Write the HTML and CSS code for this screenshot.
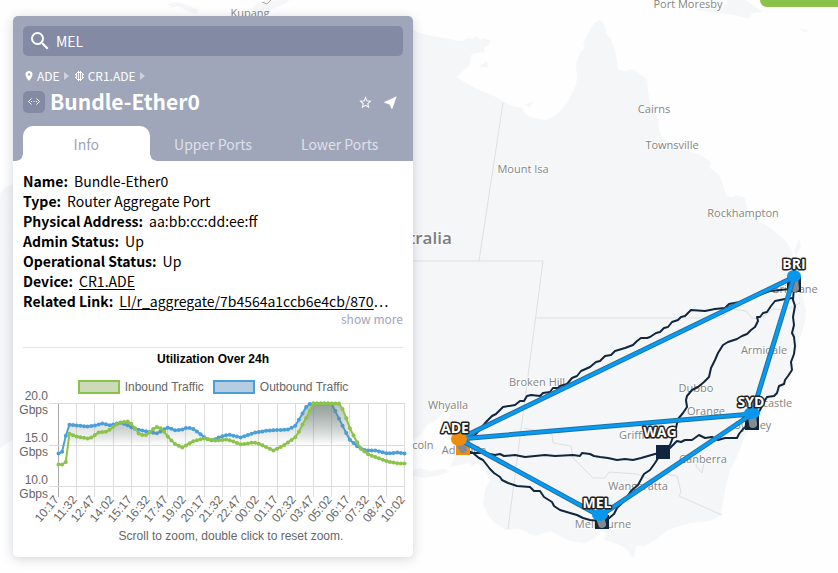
FILE: index.html
```html
<!DOCTYPE html>
<html lang="en">
<head>
<meta charset="utf-8">
<title>Network map</title>
<meta name="viewport" content="width=device-width, initial-scale=1">
<link rel="stylesheet" href="styles.css">
</head>
<body>
<svg class="map" viewBox="0 0 838 573" preserveAspectRatio="xMinYMin slice" role="img" aria-label="Map of network links">
  <g class="land">
    <path d="M0 194L4 188L13 184L200 40L413 30L420 33L432 36L445 38L458 41L463 41L467 38L473 39L477 36L480 40L484 38L491 41L489 45L484 48L485 52L477 53L471 55L470 65L462 72L457 77L464 82L475 88L487 93L498 98L510 105L522 108L526 115L535 118L545 120L553 117L560 111L567 103L572 93L576 85L577 78L576 65L580 52L585 48L583 43L589 32L594 23L600 20L605 26L606 33L611 40L615 50L617 62L618 70L625 71L633 69L640 74L647 79L648 90L650 105L658 118L659 130L663 139L672 143L683 149L695 153L707 159L711 163L709 167L720 176L723 185L726 196L733 197L736 195L745 198L748 213L757 220L768 226L775 232L785 240L792 251L794 262L798 275L801 290L806 310L805 322L798 345L795 355L793 370L788 382L778 395L765 410L757 420L745 435L738 455L730 470L725 490L721 515L710 521L690 523L668 530L655 540L645 546L636 546L634 558L630 555L628 550L620 545L608 541L603 539L607 534L601 530L595 538L585 543L570 541L550 531L535 536L520 529L505 530L490 518L483 505L485 490L490 480L485 470L477 463L472 467L470 463L460 465L450 467L453 460L457 449L450 440L446 430L454 395L455 411L444 412L435 421L427 425L420 436L413 440L413 445L200 420L100 400L10 441L0 448Z"/>
    <path d="M413 470L420 468L430 471L445 469L449 472L440 475L425 478L413 476Z"/>
    <path d="M167 4L176 2L187 5L199 10L196 14L189 12L180 7L172 7Z"/>
    <path d="M252 11L256 4L266 1L285 0L290 0L284 4L275 8L266 11Z"/>
    <path d="M695 10L706 6L722 8L728 0L745 0L757 8L763 12L752 13L749 19L735 15L718 13Z"/>
    <path d="M478 67L487 61L488 67Z"/>
    <path d="M799 238L801 246L796 256L794 252Z"/>
    <path d="M524 105L534 101L529 107Z"/>
    <path d="M800 28L810 31L803 32Z"/>
  </g>
  <g class="borders">
    <path d="M503 103L479 261M413 261H543L508 529M535 318H720L733 309L746 311L752 318L760 319L773 309L786 310L800 303M524 428L552 434L553 443L571 446L573 458L582 467L593 478L605 478L609 472L637 474L652 480L663 474L677 476L681 492L679 496L722 515M697 455L696 466L702 473L704 463"/>
    <path class="coast" d="M262 2L267 4L271 0"/>
  </g>
  <g class="places">
    <text x="250" y="17">Kupang</text>
    <text x="688" y="8">Port Moresby</text>
    <text x="654" y="113">Cairns</text>
    <text x="672" y="149">Townsville</text>
    <text x="523" y="173">Mount Isa</text>
    <text x="743" y="217">Rockhampton</text>
    <text class="country" x="415" y="244">Australia</text>
    <text x="537" y="386">Broken Hill</text>
    <text x="448" y="409">Whyalla</text>
    <text x="403" y="449">Port Lincoln</text>
    <text x="464" y="454">Adelaide</text>
    <text x="795" y="293">Brisbane</text>
    <text x="764" y="354">Armidale</text>
    <text x="696" y="392">Dubbo</text>
    <text x="706" y="415">Orange</text>
    <text x="766" y="407">Newcastle</text>
    <text x="753" y="429">Sydney</text>
    <text x="637" y="439">Griffith</text>
    <text x="703" y="463">Canberra</text>
    <text x="638" y="490">Wangaratta</text>
    <text x="603" y="528">Melbourne</text>
  </g>
  <g class="fibre">
    <path d="M462 444L475 435L487 421L492 416L496 414L503 407L515 405L520 401L524 401L527 396L531 395L540 396L543 393L550 392L553 388L558 388L560 386L567 384L572 378L577 376L581 371L590 367L596 362L600 361L605 356L611 355L615 351L625 348L633 345L637 341L641 338L647 338L650 337L656 333L660 332L664 328L668 327L672 322L678 320L681 317L685 316L691 310L705 311L715 309L725 308L729 304L740 302L770 291L790 289"/>
    <path d="M793 298L785 299L775 301L771 306L767 312L763 313L760 317L757 317L758 321L755 327L751 330L747 334L742 336L737 339L728 342L723 345L718 353L715 360L711 368L709 377L704 382L698 387L692 390L687 396L686 400L687 407L683 413L678 419L675 432L670 445L663 452"/>
    <path d="M794 287L793 300L795 306L793 317L794 325L792 333L794 337L795 346L794 354L791 362L792 370L788 376L785 380L784 384L779 386L777 393L774 396L767 397L764 402L760 410L753 422"/>
    <path d="M463 449L470 453L485 453L495 455L500 454L504 456L515 455L525 457L545 455L555 456L573 455L580 456L582 453L590 454L594 456L600 457L608 458L617 460L625 459L633 460L641 458L655 454L663 452L670 448L677 441L681 442L685 440L692 440L699 435L705 438L712 437L718 440L725 438L737 438L739 434L743 429L752 422"/>
    <path d="M463 449L473 453L479 458L483 460L490 469L494 473L500 477L502 480L508 483L517 486L530 487L534 491L540 491L544 497L552 502L554 506L560 510L570 513L577 515L583 518L590 520L601 521L608 519L614 514L617 508L625 500L631 491L638 485L644 474L650 470L655 463L660 455"/>
  </g>
  <g class="sites">
    <path class="site-active" d="M456 440h14v15h-14z"/>
    <path d="M787 277h14v15h-14zM745 416h14v14h-14zM656 445h14v14h-14zM595 515h14v14h-14z"/>
    <path class="stem" d="M459 440L463 449M794 278L795 288M752 415L753 424M600 517L602 524"/>
  </g>
  <g class="links-edge"><path d="M459 439L794 277L752 414L459 439L600 516L752 414"/></g>
  <g class="links"><path d="M459 439L794 277L752 414L459 439L600 516L752 414"/></g>
  <g class="nodes">
    <ellipse class="node-active" cx="459" cy="439" rx="8" ry="7"/>
    <ellipse cx="794" cy="276" rx="7" ry="6"/>
    <ellipse cx="752" cy="413" rx="8" ry="6"/>
    <ellipse cx="600" cy="515" rx="8" ry="6"/>
  </g>
  <g class="node-labels">
    <text x="455" y="433">ADE</text>
    <text x="794" y="269">BRI</text>
    <text x="751" y="407">SYD</text>
    <text x="660" y="437">WAG</text>
    <text x="597" y="508">MEL</text>
  </g>
</svg>

<button class="map-action" type="button" aria-label="Map options"></button>

<main class="panel">
  <header class="head">
    <label class="search">
      <svg class="search-icon" viewBox="0 0 24 24" aria-hidden="true"><path d="M15.500 14h-.79l-.28-.27A6.470 6.470 0 0 0 16 9.500 6.500 6.500 0 1 0 9.500 16c1.610 0 3.090-.59 4.230-1.570l.27.28v.79l5 4.990L20.490 19l-4.990-5zm-6 0C7.010 14 5 11.990 5 9.500S7.010 5 9.500 5 14 7.010 14 9.500 11.990 14 9.500 14z"/></svg>
      <input type="text" value="MEL" aria-label="Search">
    </label>
    <nav class="crumbs" aria-label="Breadcrumb">
      <svg class="pin" viewBox="0 0 14 20" aria-hidden="true"><path fill-rule="evenodd" d="M7 0a7 7 0 0 0-7 7c0 5 7 13 7 13s7-8 7-13a7 7 0 0 0-7-7zm0 4.500a2.500 2.500 0 1 1 0 5 2.500 2.500 0 0 1 0-5z"/></svg>
      <a href="#ade">ADE</a>
      <svg class="arrow" viewBox="0 0 5 8" aria-hidden="true"><path d="M0 0L5 4L0 8z"/></svg>
      <svg class="chip" viewBox="0 0 9 10" aria-hidden="true"><path d="M3.500 0v10M5.500 0v10M1.500 2v6M7.500 2v6M0 3.500h2M0 6.500h2M7 3.500h2M7 6.500h2M2 1.500h5M2 8.500h5"/></svg>
      <a href="#cr1">CR1.ADE</a>
      <svg class="arrow" viewBox="0 0 5 8" aria-hidden="true"><path d="M0 0L5 4L0 8z"/></svg>
    </nav>
    <div class="title-row">
      <svg class="badge" viewBox="0 0 22 22" aria-hidden="true"><path d="M8.500 7.500L5.500 10.500L8.500 13.500M13.500 7.500L16.500 10.500L13.500 13.500"/><path class="dots" d="M8 10h1v1H8zM10.500 10h1v1h-1zM13 10h1v1h-1z"/></svg>
      <h1>Bundle-Ether0</h1>
      <button type="button" aria-label="Favourite"><svg viewBox="0 0 24 24"><path d="M22 9.240l-7.190-.62L12 2 9.190 8.630 2 9.240l5.460 4.730L5.820 21 12 17.270 18.180 21l-1.630-7.030L22 9.240zM12 15.400l-3.760 2.270 1-4.280-3.320-2.880 4.380-.38L12 6.100l1.710 4.040 4.380.38-3.320 2.880 1 4.280L12 15.400z"/></svg></button>
      <button type="button" aria-label="Locate"><svg viewBox="0 0 24 24"><path d="M22 2L2 11v1.500l8.500 2.700L13.500 22H15z"/></svg></button>
    </div>
    <div class="tabs" role="tablist">
      <button class="tab tab-on" type="button" role="tab" aria-selected="true">Info</button>
      <button class="tab" type="button" role="tab" aria-selected="false">Upper Ports</button>
      <button class="tab" type="button" role="tab" aria-selected="false">Lower Ports</button>
    </div>
  </header>

  <section class="details">
    <dl>
      <div><dt>Name:</dt><dd>Bundle-Ether0</dd></div>
      <div><dt>Type:</dt><dd>Router Aggregate Port</dd></div>
      <div><dt>Physical Address:</dt><dd>aa:bb:cc:dd:ee:ff</dd></div>
      <div><dt>Admin Status:</dt><dd>Up</dd></div>
      <div><dt>Operational Status:</dt><dd>Up</dd></div>
      <div><dt>Device:</dt><dd><a href="#cr1">CR1.ADE</a></dd></div>
      <div><dt>Related Link:</dt><dd><a href="#related">LI/r_aggregate/7b4564a1ccb6e4cb/870</a>…</dd></div>
    </dl>
    <button class="more" type="button">show more</button>
  </section>

  <section class="usage">
    <h2>Utilization Over 24h</h2>
    <ul class="legend">
      <li><span class="swatch swatch-in"></span>Inbound Traffic</li>
      <li><span class="swatch swatch-out"></span>Outbound Traffic</li>
    </ul>
    <svg class="chart" id="chart" viewBox="0 0 390 130" role="img" aria-label="Utilization chart">
      <defs>
        <linearGradient id="fade" gradientUnits="userSpaceOnUse" x1="0" y1="7" x2="0" y2="49">
          <stop offset="0" class="fade-top"/>
          <stop offset="1" class="fade-end"/>
        </linearGradient>
      </defs>
      <g id="grid" class="grid"></g>
      <g id="series"></g>
      <g class="scale">
        <text x="30" y="4">20.0</text><text x="30" y="18">Gbps</text>
        <text x="30" y="46">15.0</text><text x="30" y="60">Gbps</text>
        <text x="30" y="88">10.0</text><text x="30" y="102">Gbps</text>
      </g>
      <g id="times" class="scale"></g>
    </svg>
    <p>Scroll to zoom, double click to reset zoom.</p>
  </section>
</main>
<script src="chart.js"></script>
</body>
</html>
```
FILE: styles.css
```css
* { box-sizing: border-box; }

body {
  margin: 0;
  min-height: 100vh;
  overflow: hidden;
  background: #fefefe;
  color: #000;
  font: 14px/20px "Noto Sans CJK SC", "Noto Sans", sans-serif;
}

button, input {
  margin: 0;
  padding: 0;
  border: 0;
  background: none;
  color: inherit;
  font: inherit;
}

a { color: inherit; }

/* Map */
.map {
  position: absolute;
  inset: 0;
  width: 100%;
  height: 100%;
}
.land { fill: #f5f6f8; }
.borders { fill: none; stroke: #dedfe1; stroke-width: 1; }
.coast { stroke: #aaa; }
.places {
  font: 11px "Open Sans", sans-serif;
  fill: #858585;
  stroke: #fff;
  stroke-opacity: .7;
  stroke-width: 2;
  paint-order: stroke;
  text-anchor: middle;
}
.country { font-size: 17px; font-weight: 600; fill: #7d7d7d; }
.fibre {
  fill: none;
  stroke: #10263e;
  stroke-width: 2;
  stroke-linejoin: round;
}
.sites { fill: #10263e; }
.site-active { fill: #f08c0a; }
.stem { stroke: #858991; stroke-width: 8; stroke-linecap: round; }
.links, .links-edge { fill: none; stroke-linejoin: round; }
.links-edge { stroke: #24709f; stroke-width: 5; }
.links { stroke: #049cf5; stroke-width: 3; }
.nodes { fill: #0896ee; }
.node-active { fill: #ec8c10; }
.node-labels {
  font: bold 14px "Open Sans", sans-serif;
  fill: #fff;
  stroke: #222;
  stroke-width: 3;
  stroke-linejoin: round;
  paint-order: stroke;
  text-anchor: middle;
}

.map-action {
  position: absolute;
  top: 0;
  right: 0;
  width: 78px;
  height: 7px;
  border-radius: 0 0 0 10px;
  background: #8bc34a;
}

/* Panel */
.panel {
  position: relative;
  width: 400px;
  max-width: calc(100% - 26px);
  margin: 16px 13px;
  border-radius: 5px;
  background: #fff;
  box-shadow: 0 2px 12px rgba(40, 50, 80, .2);
}
.head {
  padding: 10px 10px 0;
  border-radius: 5px 5px 0 0;
  background: #a0a6b9;
  color: #fff;
}
.search {
  display: flex;
  align-items: center;
  gap: 4px;
  height: 30px;
  padding: 0 5px;
  border-radius: 5px;
  background: #838aa4;
}
.search input { flex: 1; min-width: 0; outline: 0; }
.head svg { flex: none; fill: #fff; }
.search-icon { width: 24px; height: 24px; }

.crumbs {
  display: flex;
  align-items: center;
  gap: 5px;
  margin-top: 12px;
  padding-left: 2px;
  font-size: 12px;
  line-height: 16px;
}
.crumbs a { margin: 0 -1px; text-decoration: none; }
.pin { width: 8px; height: 10px; }
.head .arrow { width: 5px; height: 8px; fill: #cdd2dc; }
.head .chip { width: 9px; height: 10px; margin-left: 1px; fill: none; stroke: #fff; }

.title-row {
  display: flex;
  align-items: center;
  margin-top: 4px;
  height: 28px;
}
.head .badge {
  width: 22px;
  height: 22px;
  border-radius: 5px;
  background: #838aa4;
  fill: none;
  stroke: #fff;
}
.badge .dots { fill: #fff; stroke: none; }
h1 { flex: 1; margin: 0 0 0 5px; font-size: 21px; line-height: 26px; height: 28px; }
.title-row button { display: flex; margin-right: 5px; }
.title-row button + button { margin-left: 5px; }
.title-row button svg { width: 15px; height: 15px; }

.tabs { display: flex; margin-top: 10px; }
.tab {
  position: relative;
  flex: 1;
  height: 35px;
  color: #dee1e8;
}
.tab-on {
  border-radius: 10px 10px 0 0;
  background: #fff;
  color: #a0a6b9;
}
.tab-on::before, .tab-on::after {
  content: "";
  position: absolute;
  bottom: 0;
  width: 6px;
  height: 6px;
}
.tab-on::before { right: 100%; background: radial-gradient(circle at 0 0, transparent 5px, #fff 6px); }
.tab-on::after { left: 100%; background: radial-gradient(circle at 100% 0, transparent 5px, #fff 6px); }

.details { padding: 10px 10px 0; }
dl { margin: 0; }
dl div { display: flex; gap: 6px; white-space: nowrap; }
dt { font-weight: bold; }
dd { margin: 0; }
.details a { text-underline-offset: 2px; }
.more {
  display: block;
  margin: 0 0 0 auto;
  color: #a0a6b9;
  font-size: 12px;
  line-height: 16px;
}

.usage {
  margin: 20px 10px 0;
  padding-bottom: 13px;
  border-top: 1px solid #e4e4e4;
  color: #666;
  font: 12px/16px "Liberation Sans", Arial, sans-serif;
}
h2 { margin: 3px 0 0; color: #000; font-size: 12px; line-height: 16px; text-align: center; }
.legend {
  display: flex;
  justify-content: center;
  gap: 9px;
  margin: 12px 0 0;
  padding: 0;
  list-style: none;
}
.legend li { display: flex; align-items: center; gap: 5px; }
.swatch { width: 42px; height: 14px; border: 2px solid; }
.swatch-in { border-color: #8bc34a; background: #ccdab9; }
.swatch-out { border-color: #4a9fd8; background: #b5cde1; }

.chart { display: block; width: calc(100% + 10px); margin: 1px -5px 0; overflow: visible; }
.grid { stroke: #dcdcdc; stroke-width: 1; }
.grid .axis { stroke: #aaa; }
.fade-top { stop-color: #6f7d78; stop-opacity: .5; }
.fade-end { stop-color: #6f7d78; stop-opacity: 0; }
.area { fill: url(#fade); }
.line { fill: none; stroke-width: 2; }
.out .line { stroke: #4a9fd8; }
.out circle { fill: #4a9fd8; }
.in .line { stroke: #8bc34a; }
.in circle { fill: #8bc34a; }
.scale { font-size: 12px; fill: #666; text-anchor: end; }
.usage p { margin: 2px 0 0; padding-left: 36px; text-align: center; }
```
FILE: chart.js
```js
const NS = "http://www.w3.org/2000/svg";
const LEFT = 40, RIGHT = 386, TOP = 7, COUNT = 96;

function add(parent, name, attrs, text) {
  const el = document.createElementNS(NS, name);
  for (const key in attrs) el.setAttribute(key, attrs[key]);
  if (text) el.textContent = text;
  parent.appendChild(el);
  return el;
}

const labels = ["10:17", "11:32", "12:47", "14:02", "15:17", "16:32", "17:47", "19:02", "20:17", "21:32",
  "22:47", "00:02", "01:17", "02:32", "03:47", "05:02", "06:17", "07:32", "08:47", "10:02"];
const grid = document.getElementById("grid");
const times = document.getElementById("times");

labels.forEach((label, i) => {
  const x = Math.round(LEFT + i * (RIGHT - LEFT) / 19) + 0.5;
  add(grid, "path", { d: `M${x} 7V101`, class: i ? "" : "axis" });
  add(times, "text", { transform: `translate(${x + 1} 104) rotate(-50)` }, label);
});
[7.5, 49.5, 90.5].forEach(y => add(grid, "path", { d: `M31 ${y}H${RIGHT}` }));

/* Key points as [horizontal position, depth below the 20 Gbps line] */
const outbound = [[40, 50], [44, 48], [47, 33], [51, 21], [58, 22], [69, 23], [76, 22], [84, 20], [92, 22], [101, 19],
  [108, 21], [115, 25], [124, 27], [139, 30], [145, 26], [150, 24], [157, 27], [164, 26], [169, 24], [174, 25],
  [180, 29], [187, 35], [194, 37], [200, 34], [210, 31], [222, 34], [237, 29], [250, 27], [270, 26], [277, 22],
  [284, 10], [289, 1], [293, 0], [313, 0], [317, 8], [324, 22], [331, 36], [339, 43], [347, 47], [357, 47],
  [369, 50], [379, 49], [387, 50]];
const inbound = [[40, 61], [47, 61], [50.5, 30], [58, 33], [69, 35], [73, 34], [80, 29], [89, 28], [95, 23], [101, 19],
  [109, 18], [114, 21], [120, 30], [125, 32], [129, 31], [134, 26], [139, 23], [144, 26], [150, 34], [157, 41],
  [164, 44], [174, 38], [185, 35], [197, 37], [209, 36], [223, 41], [235, 39], [240, 40], [255, 47], [265, 42],
  [278, 33], [284, 21], [289, 12], [295, 0], [321, 0], [325, 7], [331, 24], [335, 32], [342, 45], [350, 51],
  [369, 58], [380, 60], [387, 60]];

function sample(keys) {
  const points = [];
  let k = 0;
  for (let i = 0; i < COUNT; i++) {
    const x = LEFT + i * (RIGHT - LEFT) / (COUNT - 1);
    while (k < keys.length - 2 && keys[k + 1][0] < x) k++;
    const [x0, y0] = keys[k], [x1, y1] = keys[k + 1];
    points.push([x + 0.5, TOP + 0.5 + y0 + (y1 - y0) * (x - x0) / (x1 - x0)]);
  }
  return points;
}

function draw(name, keys) {
  const group = add(document.getElementById("series"), "g", { class: name });
  const points = sample(keys);
  const line = "M" + points.map(p => p.join(" ")).join("L");
  add(group, "path", { class: "area", d: `${line}V91H${LEFT}Z` });
  add(group, "path", { class: "line", d: line });
  points.forEach(([cx, cy]) => add(group, "circle", { cx, cy, r: 2 }));
}

draw("out", outbound);
draw("in", inbound);
```
